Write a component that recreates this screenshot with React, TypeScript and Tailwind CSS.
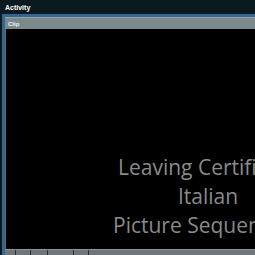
export default function App() {
  return (
    <div className="w-[255px] h-[255px] bg-[#0b1921] overflow-hidden flex flex-col" style={{ fontFamily: '"Open Sans", "Liberation Sans", sans-serif' }}>
      <div className="h-[14px] shrink-0 flex items-center px-[5px] text-[7px] font-bold text-white leading-none" style={{ fontFamily: '"Liberation Sans", Arial, sans-serif' }}>
        Activity
      </div>
      <div className="flex-1 ml-[2px] border-l-[3px] border-t-[3px] border-[#35668f] flex flex-col min-h-0">
        <div className="h-[12px] shrink-0 bg-[#7b898d] border-t border-[#95a3a7] flex items-center px-[3px] text-[6px] font-bold text-[#eef2f3] leading-none" style={{ fontFamily: '"Liberation Sans", Arial, sans-serif' }}>
          Clip
        </div>
        <div className="flex-1 min-h-0 bg-black border-l border-[#5a666a] overflow-hidden">
          <div className="ml-[106px] pt-[124px] whitespace-nowrap text-[21px] leading-[29px] text-[#8a8a8a]">
            <div className="pl-[6px]">Leaving Certificate</div>
            <div className="pl-[66px]">Italian</div>
            <div className="pl-[1px]">Picture Sequences</div>
          </div>
        </div>
        <div className="h-[6px] shrink-0 bg-[#6f777b] border-t border-[#8a9498] flex">
          <div className="w-[10px]" />
          <div className="w-[15px] border-l border-[#2a3034]" />
          <div className="w-[17px] border-l border-[#2a3034]" />
          <div className="w-[26px] border-l border-[#2a3034]" />
          <div className="w-[15px] border-l border-[#2a3034]" />
          <div className="flex-1 border-l border-[#2a3034]" />
        </div>
      </div>
    </div>
  );
}
